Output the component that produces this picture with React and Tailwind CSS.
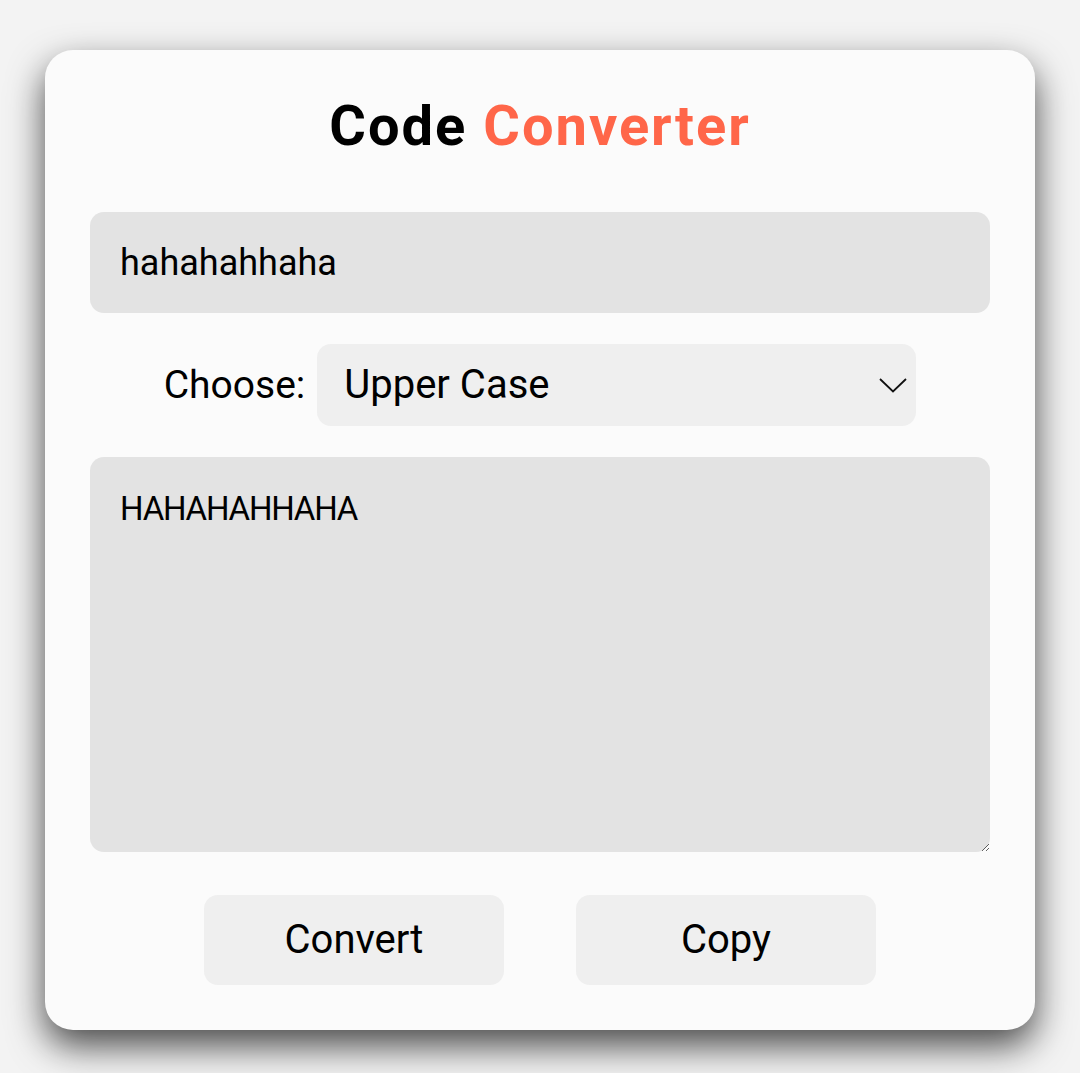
import { useState } from "react";

function convert(text, mode) {
  if (mode === "upper") return text.toUpperCase();
  if (mode === "lower") return text.toLowerCase();
  return text;
}

export default function App() {
  const [input, setInput] = useState("hahahahhaha");
  const [mode, setMode] = useState("upper");
  const [output, setOutput] = useState("HAHAHAHHAHA");

  return (
    <div
      className="min-h-screen bg-[#f3f3f3] px-[45px] pt-[50px] pb-[43px]"
      style={{ fontFamily: "Roboto, 'Noto Sans', sans-serif" }}
    >
      <div className="flex h-[980px] flex-col rounded-[28px] bg-[#fbfbfb] px-[45px] pt-[48px] pb-[45px] shadow-[0_16px_36px_rgba(0,0,0,0.7)]">
        <h1 className="text-center text-[56px] leading-[56px] font-bold tracking-[2px] text-black">
          Code <span className="text-[#ff6649]">Converter</span>
        </h1>

        <input
          value={input}
          onChange={(e) => setInput(e.target.value)}
          className="mt-[58px] h-[101px] w-full rounded-[14px] bg-[#e3e3e3] px-[30px] text-[36px] text-black outline-none"
        />

        <div className="mt-[31px] flex items-center justify-center gap-[12px]">
          <label className="text-[39px] text-black">Choose:</label>
          <div className="relative">
            <select
              value={mode}
              onChange={(e) => setMode(e.target.value)}
              className="h-[82px] w-[599px] appearance-none rounded-[14px] bg-[#efefef] pl-[27px] text-[40px] text-black outline-none"
            >
              <option value="upper">Upper Case</option>
              <option value="lower">Lower Case</option>
            </select>
            <svg
              className="pointer-events-none absolute top-[34px] right-[9px]"
              width="28"
              height="15"
              viewBox="0 0 28 15"
              fill="none"
            >
              <path d="M1 1 L14 13.5 L27 1" stroke="#111" strokeWidth="1.8" />
            </svg>
          </div>
        </div>

        <textarea
          value={output}
          onChange={(e) => setOutput(e.target.value)}
          className="mt-[31px] h-[395px] w-full rounded-[14px] bg-[#e3e3e3] px-[30px] pt-[27px] text-[33px] tracking-[-1.2px] text-black outline-none"
        />

        <div className="mt-[43px] flex justify-center gap-[72px]">
          <button
            onClick={() => setOutput(convert(input, mode))}
            className="h-[90px] w-[300px] rounded-[14px] bg-[#efefef] text-[40px] text-black"
          >
            Convert
          </button>
          <button
            onClick={() => navigator.clipboard?.writeText(output)}
            className="h-[90px] w-[300px] rounded-[14px] bg-[#efefef] text-[40px] text-black"
          >
            Copy
          </button>
        </div>
      </div>
    </div>
  );
}
